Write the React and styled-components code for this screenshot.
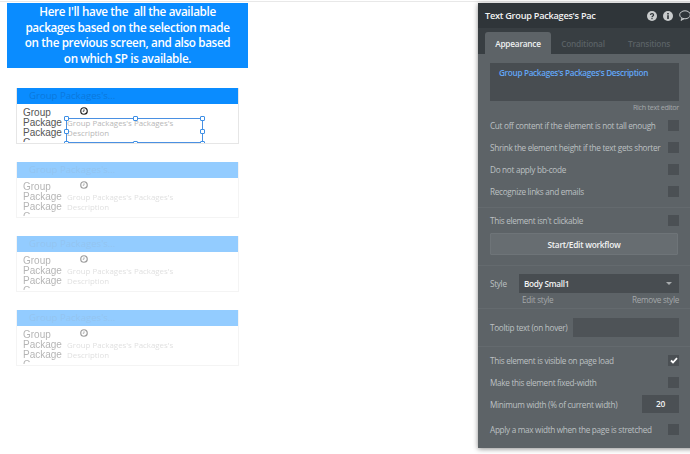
import React from "react";
import styled, { createGlobalStyle } from "styled-components";

const Global = createGlobalStyle`
  html, body {
    margin: 0;
    padding: 0;
    background: #fff;
    overflow: hidden;
  }
  * {
    box-sizing: border-box;
  }
`;

const Page = styled.div`
  position: relative;
  width: 690px;
  height: 454px;
  overflow: hidden;
  background: #fff;
  padding-top: 3px;
  font-family: "Open Sans", "Liberation Sans", sans-serif;
`;

const TopLine = styled.div`
  position: absolute;
  left: 0;
  right: 0;
  top: 1px;
  height: 1px;
  background: #e8e8e8;
`;

const Canvas = styled.div`
  width: 248px;
  padding-left: 7px;
`;

const Banner = styled.div`
  width: 241px;
  height: 65px;
  padding-top: 1px;
  background: #0a8cff;
  color: #fff;
  font-size: 11.7px;
  font-weight: 600;
  letter-spacing: -0.36px;
  line-height: 15.7px;
  text-align: center;
`;

const Cards = styled.div`
  display: flex;
  flex-direction: column;
  gap: 18px;
  width: 223px;
  margin: 20px 0 0 9px;
`;

const Card = styled.div`
  position: relative;
  height: 56px;
  overflow: hidden;
  border: 1px solid #e6e6e6;
  border-top: 0;
  opacity: ${(p) => (p.$dim ? 0.44 : 1)};
`;

const CardHeader = styled.div`
  height: 16px;
  margin: 0 -1px;
  padding-left: 13px;
  background: #0a8cff;
  color: #0a78dc;
  font-size: 9.6px;
  line-height: 16px;
`;

const CardBody = styled.div`
  display: flex;
  padding-left: 6px;
`;

const GroupName = styled.div`
  width: 44px;
  height: 38px;
  overflow: hidden;
  color: #555;
  font-family: "Liberation Sans", sans-serif;
  font-size: 10px;
  line-height: 10px;
  padding-top: 4px;
`;

const Clock = styled.svg`
  display: block;
  width: 8px;
  height: 8px;
  margin: 3px 0 0 13px;
`;

const Description = styled.div`
  width: 136px;
  margin-top: 4px;
  color: #b8b8b8;
  font-size: 7.9px;
  line-height: 9.8px;
`;

const Side = styled.div`
  display: flex;
  flex-direction: column;
`;

const Selection = styled.div`
  position: absolute;
  left: 49px;
  top: 30px;
  width: 137px;
  height: 25px;
  border: 1px solid #4a90e2;
  pointer-events: none;
`;

const Handle = styled.span`
  position: absolute;
  width: 5px;
  height: 5px;
  background: #fff;
  border: 1px solid #3d8fe6;
  border-radius: 1px;
  left: ${(p) => p.$x}px;
  top: ${(p) => p.$y}px;
`;

const Panel = styled.aside`
  position: absolute;
  left: 478px;
  top: 3px;
  width: 220px;
  height: 445px;
  background: #5d6367;
  box-shadow: 0 1px 5px rgba(0, 0, 0, 0.45);
  color: #bcc0c2;
  font-size: 8.2px;
  letter-spacing: -0.3px;
`;

const PanelTitle = styled.div`
  display: flex;
  align-items: center;
  height: 25px;
  padding-left: 7px;
  background: #2f3539;
  color: #f2f3f3;
  font-size: 9.2px;
  font-weight: 600;
  letter-spacing: -0.27px;
`;

const TitleText = styled.span`
  flex: 0 0 162px;
`;

const TitleIcons = styled.div`
  display: flex;
  align-items: center;
  gap: 6px;
`;

const TabBar = styled.div`
  display: flex;
  align-items: flex-end;
  height: 26px;
  padding-left: 7px;
  background: #383e42;
`;

const Tab = styled.div`
  width: ${(p) => p.$w}px;
  height: 22px;
  border-radius: 3px 3px 0 0;
  background: ${(p) => (p.$active ? "#5d6367" : "transparent")};
  color: ${(p) => (p.$active ? "#eef0f0" : "#5a6165")};
  font-size: 8.3px;
  font-weight: 600;
  letter-spacing: -0.24px;
  line-height: 23px;
  text-align: center;
`;

const Section = styled.div`
  padding: ${(p) => p.$top}px 19px ${(p) => p.$bottom}px 12px;
  border-bottom: ${(p) => (p.$line ? "1px solid #646a6e" : "0")};
`;

const RichBox = styled.div`
  height: 38px;
  padding: 4px 9px;
  background: #484d51;
  color: #62a6f6;
  font-size: 8.2px;
  font-weight: 600;
  letter-spacing: -0.32px;
  line-height: 11px;
`;

const RichLabel = styled.div`
  margin: 1px 0 2px;
  color: #a4a8aa;
  font-size: 7.2px;
  line-height: 10px;
  text-align: right;
`;

const Row = styled.div`
  display: flex;
  align-items: center;
  justify-content: space-between;
  height: ${(p) => p.$h || 22}px;
  white-space: nowrap;
  margin-bottom: ${(p) => p.$after || 0}px;
`;

const Check = styled.span`
  display: flex;
  align-items: center;
  justify-content: center;
  width: 11px;
  height: 11px;
  background: #4b5054;
`;

const WorkflowButton = styled.button`
  display: block;
  width: 188px;
  height: 22px;
  padding: 0;
  margin-top: 4px;
  background: #676d71;
  border: 1px solid #6e7478;
  border-radius: 1px;
  color: #f2f3f3;
  font-family: inherit;
  font-size: 8.3px;
  font-weight: 600;
  letter-spacing: -0.24px;
`;

const StyleRow = styled.div`
  display: grid;
  grid-template-columns: 29px 1fr;
  align-items: center;
`;

const Select = styled.div`
  display: flex;
  align-items: center;
  justify-content: space-between;
  height: 19px;
  padding: 0 7px 0 5px;
  background: #484d51;
  color: #f2f3f3;
  font-size: 8.2px;
  font-weight: 600;
`;

const Caret = styled.span`
  width: 0;
  height: 0;
  border: 3px solid transparent;
  border-top: 3px solid #a8acae;
  margin-top: 3px;
`;

const StyleLinks = styled.div`
  display: flex;
  justify-content: space-between;
  padding: 1px 0 3px 32px;
  color: #a4a8aa;
  line-height: 11px;
`;

const TooltipInput = styled.div`
  width: 106px;
  height: 19px;
  background: #4e5357;
`;

const NumberInput = styled.div`
  width: 37px;
  height: 18px;
  background: #4b5054;
  color: #f2f3f3;
  font-size: 8.4px;
  font-weight: 600;
  line-height: 18px;
  text-align: center;
`;

function ClockIcon() {
  return (
    <Clock viewBox="0 0 16 16" fill="none">
      <circle cx="8" cy="8" r="6.5" stroke="#222" strokeWidth="2.4" />
      <path d="M8 4.5V8.5H5.5" stroke="#222" strokeWidth="1.6" />
    </Clock>
  );
}

function PackageCard({ dim, selected }) {
  return (
    <Card $dim={dim}>
      <CardHeader>Group Packages's...</CardHeader>
      <CardBody>
        <GroupName>
          Group
          <br />
          Package
          <br />
          Package
          <br />
          G
        </GroupName>
        <Side>
          <ClockIcon />
          <Description>Group Packages's Packages's Description</Description>
        </Side>
      </CardBody>
      {selected && (
        <Selection>
          <Handle $x={-3} $y={-3} />
          <Handle $x={66} $y={-3} />
          <Handle $x={133} $y={-3} />
          <Handle $x={-3} $y={10} />
          <Handle $x={133} $y={10} />
          <Handle $x={-3} $y={22} />
          <Handle $x={66} $y={22} />
          <Handle $x={133} $y={22} />
        </Selection>
      )}
    </Card>
  );
}

function HelpIcons() {
  return (
    <TitleIcons>
      <svg width="10" height="10" viewBox="0 0 10 10">
        <circle cx="5" cy="5" r="5" fill="#c9cccd" />
        <path d="M3.4 3.9C3.5 2.1 6.6 2.1 6.6 3.9C6.6 5 5 5 5 6.2" fill="none" stroke="#2f3539" strokeWidth="1.2" />
        <rect x="4.4" y="7" width="1.2" height="1.2" fill="#2f3539" />
      </svg>
      <svg width="10" height="10" viewBox="0 0 10 10">
        <circle cx="5" cy="5" r="5" fill="#c9cccd" />
        <rect x="4.2" y="4.2" width="1.6" height="3.8" fill="#2f3539" />
        <rect x="4.2" y="2" width="1.6" height="1.5" fill="#2f3539" />
      </svg>
      <svg width="12" height="11" viewBox="0 0 12 11" fill="none">
        <ellipse cx="6" cy="4.8" rx="5.3" ry="4" stroke="#c9cccd" />
        <path d="M3 8L2 10.4L5 8.8" stroke="#c9cccd" />
      </svg>
    </TitleIcons>
  );
}

function Tick() {
  return (
    <svg width="8" height="7" viewBox="0 0 8 7" fill="none">
      <path d="M1 3.5L3 5.5L7 1.2" stroke="#fff" strokeWidth="1.8" />
    </svg>
  );
}

export default function App() {
  return (
    <Page>
      <Global />
      <TopLine />
      <Canvas>
        <Banner>
          Here I'll have the&nbsp; all the available
          <br />
          packages based on the selection made
          <br />
          on the previous screen, and also based
          <br />
          on which SP is available.
        </Banner>
        <Cards>
          <PackageCard selected />
          <PackageCard dim />
          <PackageCard dim />
          <PackageCard dim />
        </Cards>
      </Canvas>
      <Panel>
        <PanelTitle>
          <TitleText>Text Group Packages's Pac</TitleText>
          <HelpIcons />
        </PanelTitle>
        <TabBar>
          <Tab $active $w={66}>Appearance</Tab>
          <Tab $w={64}>Conditional</Tab>
          <Tab $w={68}>Transitions</Tab>
        </TabBar>
        <Section $line $top={9} $bottom={5}>
          <RichBox>Group Packages's Packages's Description</RichBox>
          <RichLabel>Rich text editor</RichLabel>
          <Row>Cut off content if the element is not tall enough<Check /></Row>
          <Row>Shrink the element height if the text gets shorter<Check /></Row>
          <Row>Do not apply bb-code<Check /></Row>
          <Row>Recognize links and emails<Check /></Row>
        </Section>
        <Section $line $top={3} $bottom={10}>
          <Row $h={18}>This element isn't clickable<Check /></Row>
          <WorkflowButton>Start/Edit workflow</WorkflowButton>
        </Section>
        <Section $line $top={8} $bottom={0}>
          <StyleRow>
            Style
            <Select>
              Body Small1
              <Caret />
            </Select>
          </StyleRow>
          <StyleLinks>
            <span>Edit style</span>
            <span>Remove style</span>
          </StyleLinks>
        </Section>
        <Section $line $top={9} $bottom={9}>
          <Row $h={19}>Tooltip text (on hover)<TooltipInput /></Row>
        </Section>
        <Section $top={2} $bottom={0}>
          <Row>This element is visible on page load<Check><Tick /></Check></Row>
          <Row>Make this element fixed-width<Check /></Row>
          <Row $after={3}>Minimum width (% of current width)<NumberInput>20</NumberInput></Row>
          <Row>Apply a max width when the page is stretched<Check /></Row>
        </Section>
      </Panel>
    </Page>
  );
}
